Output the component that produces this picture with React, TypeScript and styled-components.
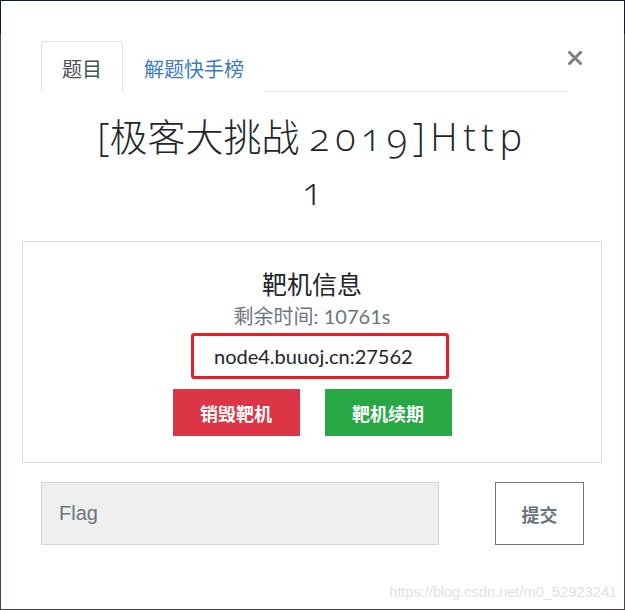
import React from "react";
import styled, { createGlobalStyle } from "styled-components";

const Global = createGlobalStyle`
  html, body { margin: 0; padding: 0; background: #fff; }
  body { font-family: Lato, "Noto Sans CJK SC", sans-serif; color: #212529; }
  * { box-sizing: border-box; }
`;

const CJK = `"Noto Sans CJK SC", sans-serif`;

const Frame = styled.div`
  height: 610px;
  padding: 1px;
  background: linear-gradient(to bottom, #0b1a3d 34px, #5b3c4a 34px);
`;

const Modal = styled.div`
  height: 100%;
  background: #fff;
  display: flex;
  flex-direction: column;
`;

const Header = styled.div`
  display: flex;
  align-items: flex-start;
  padding: 40px 42px 0 40px;
`;

const TabList = styled.div`
  flex: 1;
  display: flex;
  border-bottom: 1px solid #dee2e6;
  height: 51px;
`;

const Tab = styled.div<{ $active?: boolean }>`
  height: 51px;
  padding: 0 20px;
  display: flex;
  align-items: center;
  padding-top: 4px;
  font-family: ${CJK};
  font-size: 20px;
  color: ${(p) => (p.$active ? "#495057" : "#3a7cc0")};
  border: 1px solid ${(p) => (p.$active ? "#dee2e6" : "transparent")};
  border-bottom-color: ${(p) => (p.$active ? "#fff" : "transparent")};
  border-radius: 4px 4px 0 0;
  background: #fff;
`;

const Close = styled.button`
  border: 0;
  background: none;
  padding: 0;
  margin: 10px 0 0 1px;
  width: 14px;
  height: 14px;
  display: flex;
  cursor: pointer;
`;

const Title = styled.h2`
  margin: 17px auto 0;
  width: 440px;
  text-align: center;
  font-family: "Open Sans", ${CJK};
  font-weight: 300;
  font-size: 38px;
  line-height: 54px;
  color: #212529;
  font-variant-numeric: oldstyle-nums;
`;

const Latin = styled.span<{ $spacing: number }>`
  letter-spacing: ${(p) => p.$spacing}px;
`;

const Card = styled.div`
  margin: 24px 22px 0 21px;
  border: 1px solid #dcdcdc;
  padding: 27px 20px 26px;
  display: flex;
  flex-direction: column;
  align-items: center;
`;

const CardTitle = styled.h4`
  margin: 0;
  font-family: ${CJK};
  font-weight: 400;
  font-size: 25px;
  line-height: 29px;
  color: #212529;
`;

const Remaining = styled.div`
  margin-top: 5px;
  font-family: Lato, ${CJK};
  font-size: 20px;
  line-height: 27px;
  color: #6c757d;
`;

const Address = styled.div`
  margin: 3px 0 0 16px;
  width: 258px;
  height: 46px;
  border: 3px solid #ec1c24;
  border-radius: 3px;
  padding-left: 20px;
  display: flex;
  align-items: center;
  font-family: Lato, sans-serif;
  font-size: 20px;
  color: #212529;
`;

const Buttons = styled.div`
  margin-top: 10px;
  display: flex;
  gap: 25px;
`;

const ActionButton = styled.button<{ $tone: "danger" | "success" }>`
  width: 127px;
  height: 47px;
  border: 0;
  border-radius: 0;
  background: ${(p) => (p.$tone === "danger" ? "#dc3545" : "#28a745")};
  color: #fff;
  font-family: ${CJK};
  font-weight: 700;
  font-size: 18px;
  cursor: pointer;
`;

const FormRow = styled.div`
  margin-top: 19px;
  display: flex;
  justify-content: space-between;
  padding: 0 40px 0 40px;
`;

const FlagInput = styled.input`
  width: 398px;
  height: 63px;
  background: #efefef;
  border: 1px solid #ced4da;
  border-radius: 0;
  padding: 0 17px;
  font-family: "Liberation Sans", Arial, sans-serif;
  font-size: 20px;
  color: #495057;
  outline: none;
  &::placeholder { color: #6c757d; }
`;

const SubmitButton = styled.button`
  width: 89px;
  height: 63px;
  background: #fff;
  border: 1px solid #6c757d;
  border-radius: 0;
  color: #6c757d;
  font-family: ${CJK};
  font-weight: 700;
  font-size: 18px;
  cursor: pointer;
`;

const Watermark = styled.div`
  margin-top: auto;
  padding: 0 7px 8px 0;
  text-align: right;
  font-family: "Liberation Sans", Arial, sans-serif;
  font-size: 15px;
  letter-spacing: -0.2px;
  line-height: 18px;
  color: #e2e2e2;
`;

export default function App() {
  return (
    <>
      <Global />
      <Frame>
        <Modal>
          <Header>
            <TabList>
              <Tab $active>题目</Tab>
              <Tab>解题快手榜</Tab>
            </TabList>
            <Close aria-label="close">
              <svg width="14" height="14" viewBox="0 0 14 14">
                <path d="M1.5 1.5 L12.5 12.5 M12.5 1.5 L1.5 12.5" stroke="#808080" strokeWidth="3" strokeLinecap="square" />
              </svg>
            </Close>
          </Header>
          <Title>
            [极客大挑战 <Latin $spacing={5.5}>2019]Http</Latin> 1
          </Title>
          <Card>
            <CardTitle>靶机信息</CardTitle>
            <Remaining>剩余时间: 10761s</Remaining>
            <Address>node4.buuoj.cn:27562</Address>
            <Buttons>
              <ActionButton $tone="danger">销毁靶机</ActionButton>
              <ActionButton $tone="success">靶机续期</ActionButton>
            </Buttons>
          </Card>
          <FormRow>
            <FlagInput placeholder="Flag" />
            <SubmitButton>提交</SubmitButton>
          </FormRow>
          <Watermark>https://blog.csdn.net/m0_52923241</Watermark>
        </Modal>
      </Frame>
    </>
  );
}
